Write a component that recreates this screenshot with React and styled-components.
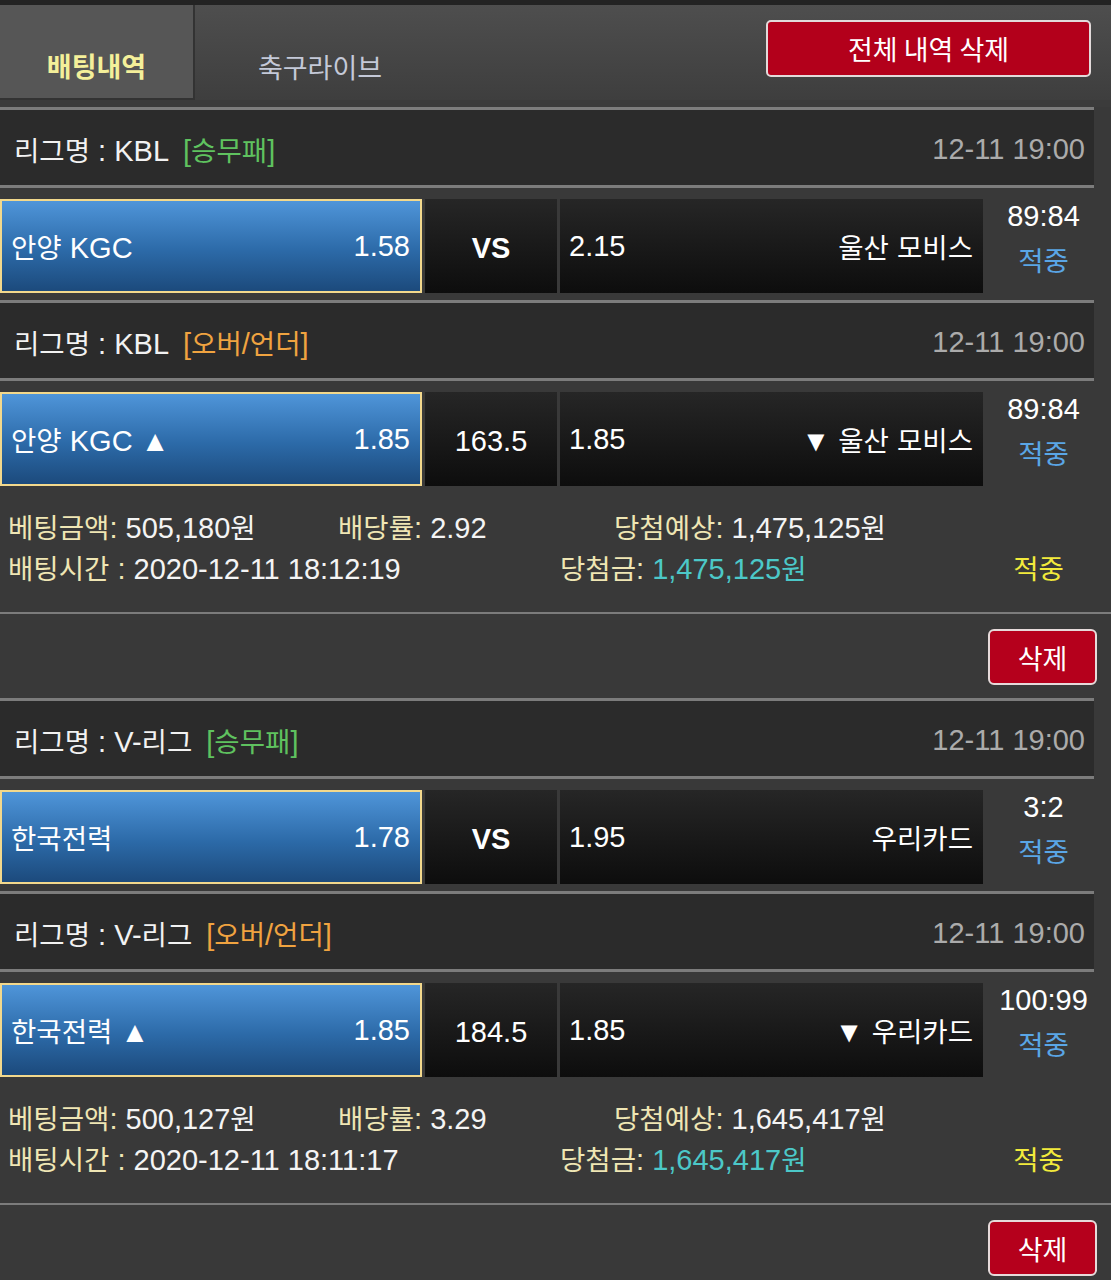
import React from "react";
import styled, { createGlobalStyle } from "styled-components";

const Global = createGlobalStyle`
  html, body { margin: 0; padding: 0; background: #393939; }
  body { font-family: "Liberation Sans", "Noto Sans CJK KR", sans-serif; color: #f2f2f2; }
`;

const Page = styled.div`
  width: 1111px;
  background: #393939;
  overflow: hidden;
  font-size: 29px;
`;

const Ko = styled.span`
  font-family: "Noto Sans CJK KR", sans-serif;
  font-size: 0.95em;
`;

const HANGUL = /([\u3131-\u318E\uAC00-\uD7A3]+)/;
const ko = (s) =>
  String(s)
    .split(HANGUL)
    .map((part, i) => (HANGUL.test(part) ? <Ko key={i}>{part}</Ko> : part));

const TopStrip = styled.div`
  height: 5px;
  background: #232323;
`;

const Header = styled.div`
  height: 95px;
  display: flex;
  align-items: stretch;
  background: linear-gradient(#4e4e4e, #3e3e3e);
`;

const Tab = styled.div`
  width: ${(p) => (p.$active ? "195px" : "250px")};
  box-sizing: border-box;
  display: flex;
  align-items: center;
  justify-content: center;
  padding-top: 28px;
  font-family: "Noto Sans CJK KR", sans-serif;
  font-size: 27px;
  font-weight: ${(p) => (p.$active ? 700 : 400)};
  color: ${(p) => (p.$active ? "#f4f09a" : "#c4c9d8")};
  background: ${(p) => (p.$active ? "#565656" : "transparent")};
  border: ${(p) => (p.$active ? "2px solid #333" : "none")};
  border-top: none;
  border-left: none;
`;

const HeaderSpacer = styled.div`
  flex: 1;
`;

const DeleteAllButton = styled.button`
  align-self: flex-start;
  margin: 15px 20px 0 0;
  width: 325px;
  height: 57px;
  border: 2px solid #e2dada;
  border-radius: 5px;
  background: #b3001b;
  color: #fff;
  font-family: "Noto Sans CJK KR", sans-serif;
  font-size: 27px;
  padding: 0;
`;

const HeaderGap = styled.div`
  height: 7px;
  background: #3b3b3b;
`;

const LeagueBar = styled.div`
  width: 1094px;
  height: 81px;
  box-sizing: border-box;
  border-top: 3px solid #7c7c7c;
  border-bottom: 3px solid #7c7c7c;
  background: #2b2b2b;
  display: flex;
  align-items: center;
  padding: 3px 9px 0 14px;
`;

const LeagueName = styled.span`
  color: #f2f2f2;
`;

const MarketTag = styled.span`
  margin-left: 14px;
  color: ${(p) => (p.$kind === "ou" ? "#f0a340" : "#5fc25f")};
`;

const DateText = styled.span`
  margin-left: auto;
  color: #ababab;
`;

const MatchRow = styled.div`
  width: 1094px;
  height: 112px;
  box-sizing: border-box;
  padding: 11px 0 7px;
  display: flex;
  align-items: stretch;
`;

const HomeBox = styled.div`
  width: 422px;
  box-sizing: border-box;
  border: 2px solid #f2d88c;
  background: linear-gradient(#4f95d9, #2c6aa8 55%, #1c4a7c);
  display: flex;
  align-items: center;
  justify-content: space-between;
  padding: 0 10px 0 9px;
  color: #fff;
`;

const DarkBox = styled.div`
  margin-left: 3px;
  width: ${(p) => p.$w}px;
  box-sizing: border-box;
  background: linear-gradient(#262626, #0d0d0d);
  display: flex;
  align-items: center;
  justify-content: ${(p) => (p.$center ? "center" : "space-between")};
  padding: ${(p) => (p.$center ? "4px 0 0" : "0 10px 0 9px")};
  font-weight: ${(p) => (p.$bold ? 700 : 400)};
  color: #fff;
`;

const ResultCol = styled.div`
  flex: 1;
  display: flex;
  flex-direction: column;
  align-items: center;
  justify-content: center;
  gap: 6px;
  margin-top: -14px;
  padding-left: 10px;
`;

const Score = styled.span`
  color: #fff;
`;

const HitBlue = styled(Ko)`
  color: #5aa6e6;
`;

const Info = styled.div`
  padding: 12px 0 26px;
  height: 119px;
  box-sizing: border-box;
`;

const InfoRow = styled.div`
  height: 41px;
  display: flex;
  align-items: center;
`;

const InfoCell = styled.div`
  width: ${(p) => (p.$w ? `${p.$w}px` : "auto")};
  flex: ${(p) => (p.$w ? "none" : 1)};
  box-sizing: border-box;
  padding-left: ${(p) => p.$pl || 0}px;
  text-align: ${(p) => (p.$center ? "center" : "left")};
  white-space: nowrap;
`;

const Label = styled.span`
  color: #efe6b4;
`;

const Value = styled.span`
  color: ${(p) => (p.$cyan ? "#4cc8c8" : "#f4f4f4")};
`;

const HitYellow = styled(Ko)`
  color: #f2ea3c;
`;

const Divider = styled.div`
  height: 2px;
  background: #7c7c7c;
`;

const DeleteRow = styled.div`
  height: 84px;
  display: flex;
  justify-content: flex-end;
  align-items: flex-start;
  padding: 15px 14px 0 0;
  box-sizing: border-box;
`;

const DeleteButton = styled.button`
  width: 109px;
  height: 56px;
  border: 2px solid #e6dada;
  border-radius: 6px;
  background: #b5001c;
  color: #fff;
  font-family: "Noto Sans CJK KR", sans-serif;
  font-size: 27px;
  padding: 0;
`;

const bets = [
  {
    games: [
      { league: "KBL", kind: "wdl", date: "12-11 19:00", home: "안양 KGC", homeOdd: "1.58", mid: "VS", awayOdd: "2.15", away: "울산 모비스", score: "89:84" },
      { league: "KBL", kind: "ou", date: "12-11 19:00", home: "안양 KGC ▲", homeOdd: "1.85", mid: "163.5", awayOdd: "1.85", away: "▼ 울산 모비스", score: "89:84" },
    ],
    amount: "505,180원",
    rate: "2.92",
    expected: "1,475,125원",
    time: "2020-12-11 18:12:19",
    win: "1,475,125원",
  },
  {
    games: [
      { league: "V-리그", kind: "wdl", date: "12-11 19:00", home: "한국전력", homeOdd: "1.78", mid: "VS", awayOdd: "1.95", away: "우리카드", score: "3:2" },
      { league: "V-리그", kind: "ou", date: "12-11 19:00", home: "한국전력 ▲", homeOdd: "1.85", mid: "184.5", awayOdd: "1.85", away: "▼ 우리카드", score: "100:99" },
    ],
    amount: "500,127원",
    rate: "3.29",
    expected: "1,645,417원",
    time: "2020-12-11 18:11:17",
    win: "1,645,417원",
  },
];

function Game({ g }) {
  return (
    <>
      <LeagueBar>
        <LeagueName>{ko(`리그명 : ${g.league}`)}</LeagueName>
        <MarketTag $kind={g.kind}>{ko(g.kind === "ou" ? "[오버/언더]" : "[승무패]")}</MarketTag>
        <DateText>{g.date}</DateText>
      </LeagueBar>
      <MatchRow>
        <HomeBox>
          <span>{ko(g.home)}</span>
          <span>{g.homeOdd}</span>
        </HomeBox>
        <DarkBox $w={132} $center $bold={g.mid === "VS"}>{g.mid}</DarkBox>
        <DarkBox $w={423}>
          <span>{g.awayOdd}</span>
          <span>{ko(g.away)}</span>
        </DarkBox>
        <ResultCol>
          <Score>{g.score}</Score>
          <HitBlue>적중</HitBlue>
        </ResultCol>
      </MatchRow>
    </>
  );
}

export default function App() {
  return (
    <Page>
      <Global />
      <TopStrip />
      <Header>
        <Tab $active>배팅내역</Tab>
        <Tab>축구라이브</Tab>
        <HeaderSpacer />
        <DeleteAllButton>전체 내역 삭제</DeleteAllButton>
      </Header>
      <HeaderGap />
      {bets.map((b, i) => (
        <div key={i}>
          {b.games.map((g, j) => (
            <Game key={j} g={g} />
          ))}
          <Info>
            <InfoRow>
              <InfoCell $w={338} $pl={8}>
                <Label>{ko("베팅금액:")} </Label>
                <Value>{ko(b.amount)}</Value>
              </InfoCell>
              <InfoCell $w={276}>
                <Label>{ko("배당률:")} </Label>
                <Value>{b.rate}</Value>
              </InfoCell>
              <InfoCell>
                <Label>{ko("당첨예상:")} </Label>
                <Value>{ko(b.expected)}</Value>
              </InfoCell>
            </InfoRow>
            <InfoRow>
              <InfoCell $w={560} $pl={8}>
                <Label>{ko("배팅시간 :")} </Label>
                <Value>{b.time}</Value>
              </InfoCell>
              <InfoCell $w={423}>
                <Label>{ko("당첨금:")} </Label>
                <Value $cyan>{ko(b.win)}</Value>
              </InfoCell>
              <InfoCell $w={111} $center>
                <HitYellow>적중</HitYellow>
              </InfoCell>
            </InfoRow>
          </Info>
          <Divider />
          <DeleteRow>
            <DeleteButton>삭제</DeleteButton>
          </DeleteRow>
        </div>
      ))}
    </Page>
  );
}
